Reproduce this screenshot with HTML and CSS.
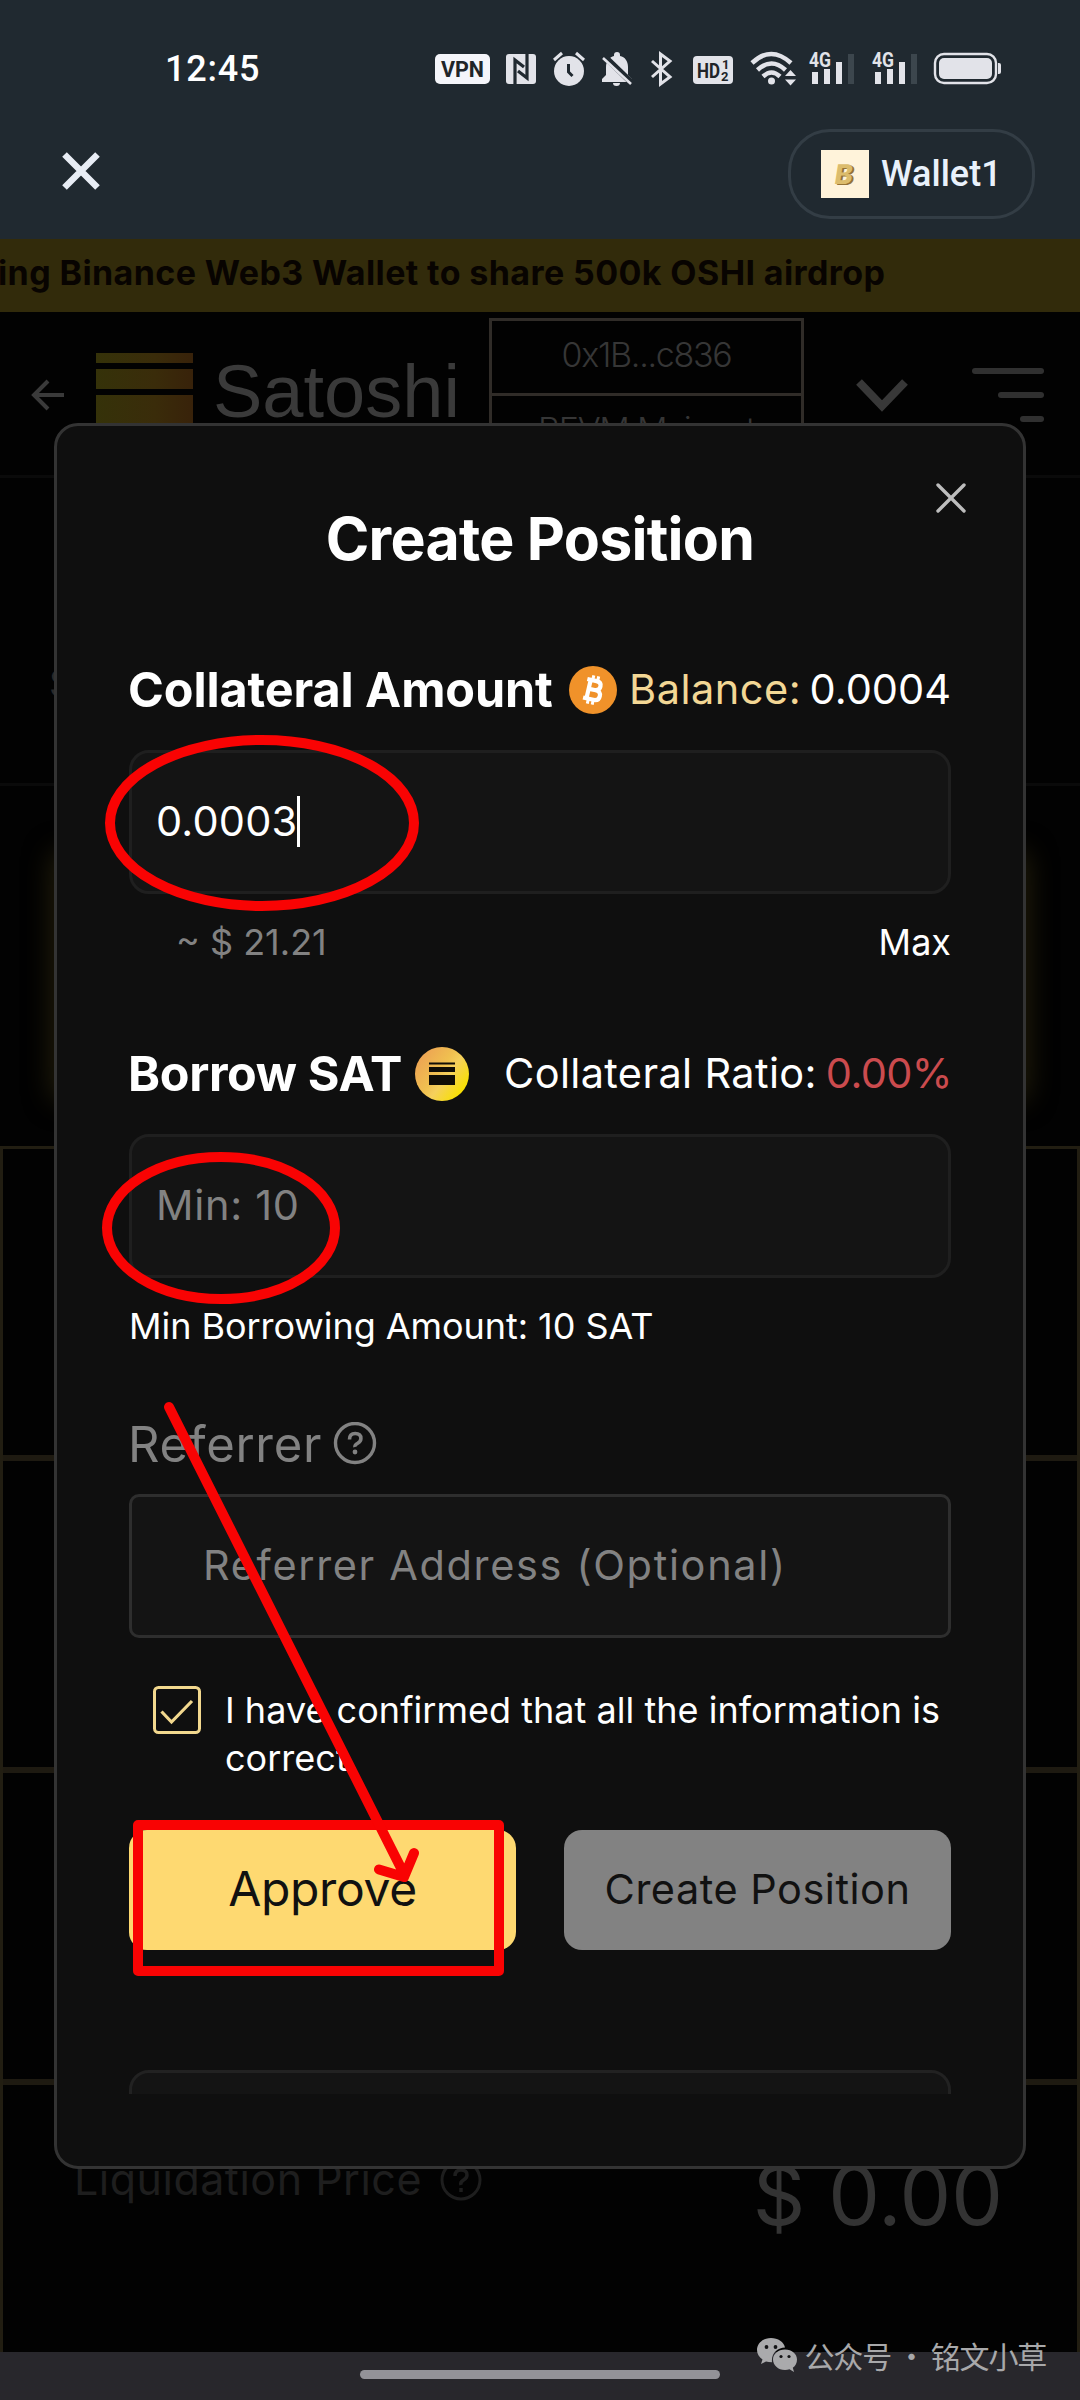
FILE: index.html
```html
<!DOCTYPE html>
<html lang="en">
<head>
<meta charset="utf-8">
<title>Create Position</title>
<link rel="stylesheet" href="styles.css">
</head>
<body>
<div class="screen">
  <header class="statusbar">
    <span class="clock">12:45</span>
    <div class="status-icons">
      <svg width="56" height="36" viewBox="435 51 56 36"><rect x="435" y="54" width="55" height="30" rx="5" fill="#f4f5fa"/><text class="t-vpn" x="441" y="77" textLength="43" lengthAdjust="spacingAndGlyphs">VPN</text></svg>
      <svg width="31" height="36" viewBox="506 51 31 36"><rect x="506" y="54" width="30" height="30" rx="3" fill="#e2e3e9"/><path d="M515 84V60L524 67M527 54V78L518 71" fill="none" stroke="#202930" stroke-width="3.2"/></svg>
      <svg width="33" height="36" viewBox="552 51 33 36"><circle cx="569" cy="71" r="15" fill="#e2e3e9"/><path d="M554 60l8-7M584 60l-8-7" stroke="#e2e3e9" stroke-width="3"/><path d="M568.500 64v8l4 4" fill="none" stroke="#202930" stroke-width="3"/></svg>
      <svg width="36" height="36" viewBox="600 51 36 36"><path d="M602 82v-3l4-4V67c0-6 4-10 8-11v-1q0-3 3-3t3 3v1c5 1 8 5 8 11v8l4 4v3zM613 83h7q0 3-3.500 3t-3.500-3z" fill="#e2e3e9"/><path d="M604 56l29 28" stroke="#202930" stroke-width="6"/><path d="M603 58l28 26" stroke="#e2e3e9" stroke-width="2.600"/></svg>
      <svg width="27" height="36" viewBox="651 51 27 36"><path d="M652 61l18 16-9.500 7V54l9.500 7-18 16" fill="none" stroke="#e2e3e9" stroke-width="3"/></svg>
      <svg width="42" height="36" viewBox="693 51 42 36"><rect x="693" y="56" width="40" height="28" rx="4" fill="#e2e3e9"/><text class="t-hd" x="697" y="78" textLength="23" lengthAdjust="spacingAndGlyphs">HD</text><text class="t-sub" x="722" y="69">1</text><text class="t-sub" x="721" y="81">2</text></svg>
      <svg width="43" height="36" viewBox="750 51 43 36"><g fill="none" stroke="#e2e3e9" stroke-width="4.500"><path d="M752 63q19-18 39 0"/><path d="M757.500 70q14-13 28 0"/><path d="M763 76.500q8.500-8 17 0"/></g><circle cx="771.500" cy="81" r="3.500" fill="#e2e3e9"/><path d="M785 76l5.500-6 5.500 6zM785 79.500l5.500 6 5.500-6z" fill="#e2e3e9"/></svg>
      <svg width="48" height="36" viewBox="808 51 48 36"><text class="t-4g" x="809" y="67" textLength="22" lengthAdjust="spacingAndGlyphs">4G</text><path d="M812 72h6v12h-6zM824 69h6v15h-6zM836 62h6v22h-6z" fill="#e2e3e9"/><path d="M848 54h6v30h-6z" fill="#3c464d"/></svg>
      <svg width="48" height="36" viewBox="808 51 48 36"><text class="t-4g" x="809" y="67" textLength="22" lengthAdjust="spacingAndGlyphs">4G</text><path d="M812 72h6v12h-6zM824 69h6v15h-6zM836 62h6v22h-6z" fill="#e2e3e9"/><path d="M848 54h6v30h-6z" fill="#3c464d"/></svg>
      <svg width="68" height="36" viewBox="934 51 68 36"><rect x="935" y="54" width="61" height="29" rx="9" fill="none" stroke="#e2e3e9" stroke-width="2.400"/><rect x="939" y="58" width="53" height="21" rx="5" fill="#e2e3e9"/><path d="M998 63h1q2 0 2 2v7q0 2-2 2h-1z" fill="#e2e3e9"/></svg>
    </div>
  </header>

  <div class="appbar">
    <svg class="appbar-close" width="38" height="38" viewBox="0 0 38 38"><path d="M2.500 2.500l33 33M35.500 2.500l-33 33" stroke="#e8edf5" stroke-width="6.500"/></svg>
    <div class="wallet">
      <svg width="48" height="48" viewBox="0 0 48 48"><rect width="48" height="48" fill="#fff3da"/><g transform="skewX(-9)"><text class="t-b t-b-back" x="20" y="35">B</text><text class="t-b" x="18" y="34">B</text></g></svg>
      <span>Wallet1</span>
    </div>
  </div>

  <div class="banner"><span>ing Binance Web3 Wallet to share 500k OSHI airdrop</span></div>

  <nav class="nav">
    <svg class="nav-back" width="34" height="32" viewBox="0 0 34 32"><path d="M33 16H3M17 2L3 16l14 14" fill="none" stroke="#3a3a3a" stroke-width="4"/></svg>
    <div class="logo"><i></i><i></i><i></i></div>
    <span class="brand">Satoshi</span>
    <div class="account"><span>0x1B...c836</span><span>BEVM Mainnet</span></div>
    <svg class="nav-chevron" width="52" height="34" viewBox="0 0 52 34"><path d="M3 4l23 24L49 4" fill="none" stroke="#383838" stroke-width="8"/></svg>
    <div class="burger"><i></i><i></i><i></i></div>
  </nav>

  <div class="price"><span>$</span></div>
  <div class="glow-wrap"><div class="glow"></div></div>

  <div class="stats">
    <div class="stat"></div>
    <div class="stat"></div>
    <div class="stat"></div>
    <div class="stat stat-liq">
      <span class="liq-label">Liquidation Price</span>
      <svg class="liq-help" width="42" height="42" viewBox="0 0 42 42"><circle cx="21" cy="21" r="19" fill="none" stroke="#1e1e1e" stroke-width="3"/><path d="M15 17q0-6 6-6t6 5q0 3-3.500 5T21 26M21 29v4" fill="none" stroke="#1e1e1e" stroke-width="3.500"/></svg>
      <span class="liq-value">$ 0.00</span>
    </div>
  </div>

  <footer class="homebar"><i></i></footer>

  <section class="modal">
    <svg class="modal-close" width="30" height="30" viewBox="0 0 30 30"><path d="M2 2l26 26M28 2L2 28" stroke="#bdbdbd" stroke-width="3.400" stroke-linecap="round"/></svg>
    <h1 class="title">Create Position</h1>

    <div class="row row-collateral">
      <h2>Collateral Amount</h2>
      <svg width="48" height="48" viewBox="0 0 48 48"><circle cx="24" cy="24" r="24" fill="#f0922a"/><g transform="rotate(13 24 24)" fill="none" stroke="#fff" stroke-width="4.200"><path d="M16 14.500h9.500q5 0 5 4.500t-5 4.700h-6.500M19.500 14.500v19M16 33.500h10.500q5.500 0 5.500-5t-5.500-4.800"/><path d="M21.500 9.500v5M26.500 9.500v5M21.500 33.500v5M26.500 33.500v5" stroke-width="3"/></g></svg>
      <span class="balance-label">Balance:</span>
      <span class="balance-value">0.0004</span>
    </div>
    <div class="field"><span class="field-value">0.0003</span><i class="caret"></i></div>
    <div class="hint"><span class="usd">~ $ 21.21</span><span class="max">Max</span></div>

    <div class="row row-borrow">
      <h2>Borrow SAT</h2>
      <svg width="54" height="54" viewBox="0 0 54 54"><defs><linearGradient id="sat" x1="0.100" y1="0.200" x2="0.900" y2="0.800"><stop offset="0" stop-color="#eda553"/><stop offset=".42" stop-color="#f0c050"/><stop offset=".6" stop-color="#f5d05c"/><stop offset="1" stop-color="#f8e000"/></linearGradient></defs><circle cx="27" cy="27" r="27" fill="url(#sat)"/><path d="M14 15.500h26v2H14zM14 20h26v5H14zM14 28h26v10H14z" fill="#100d06"/></svg>
      <span class="ratio-label">Collateral Ratio:</span>
      <span class="ratio-value">0.00%</span>
    </div>
    <div class="field"><span class="field-hint">Min: 10</span></div>
    <div class="hint"><span class="min">Min Borrowing Amount: 10 SAT</span></div>

    <div class="referrer">
      <span>Referrer</span>
      <svg width="44" height="44" viewBox="0 0 44 44"><circle cx="22" cy="21" r="19.500" fill="none" stroke="#828282" stroke-width="3.400"/><path d="M16.500 17.500q0-6 5.700-6t5.700 5q0 3-3.200 4.800T22 25" fill="none" stroke="#828282" stroke-width="3.600"/><circle cx="22" cy="30" r="2.400" fill="#828282"/></svg>
    </div>
    <div class="field field-ref"><span>Referrer Address (Optional)</span></div>

    <div class="confirm">
      <svg width="48" height="48" viewBox="0 0 48 48"><rect x="1.500" y="1.500" width="45" height="45" rx="4" fill="none" stroke="#f2d88e" stroke-width="3"/><path d="M8.500 25.500L18.500 36 39 15" fill="none" stroke="#f2d88e" stroke-width="3.200"/></svg>
      <p>I have confirmed that all the information is correct.</p>
    </div>

    <div class="actions">
      <button class="approve">Approve</button>
      <button class="create">Create Position</button>
    </div>
    <div class="peek"><div class="peek-box"></div></div>
  </section>

  <svg class="marks" width="1080" height="2400" viewBox="0 0 1080 2400" fill="none" stroke="#f90303" stroke-width="10">
    <ellipse cx="262" cy="823" rx="152" ry="83"/>
    <ellipse cx="221" cy="1228" rx="114" ry="71"/>
    <rect x="138" y="1825" width="361" height="146" stroke-linejoin="round"/>
    <path d="M169 1407L404 1874M379 1869.500L404 1877L414 1853" stroke-linecap="round" stroke-linejoin="round"/>
  </svg>

  <div class="watermark">
    <svg width="42" height="36" viewBox="0 0 42 36"><path d="M15 1C7 1 1 6.500 1 13c0 4 2 7 5.500 9.500L5 27l5-2.500q2.500.8 6 .8C15 16 22 10.500 29 10.500 28 5 22 1 15 1z" fill="#aaaaac"/><path d="M29 12.500c-7 0-12 4.500-12 10s5 10.500 12 10.500q2.500 0 4.500-.7L38 35l-1.200-4.200C39.500 29 41 26 41 22.500c0-5.500-5-10-12-10z" fill="#aaaaac"/><g fill="#141416"><circle cx="10.500" cy="10" r="1.900"/><circle cx="19.500" cy="10" r="1.900"/><circle cx="25" cy="19.500" r="1.600"/><circle cx="33" cy="19.500" r="1.600"/></g></svg>
    <span>公众号 · 铭文小草</span>
  </div>
</div>
</body>
</html>
```
FILE: styles.css
```css
* { box-sizing: border-box; margin: 0; padding: 0; }
body { background: #020202; font-family: Inter, "Liberation Sans", sans-serif; }
svg, i { display: block; flex: none; }
span { white-space: nowrap; }

.screen { position: relative; width: 1080px; height: 2400px; overflow: hidden; background: #020202; display: flex; flex-direction: column; }
.screen > * { flex: none; }

/* system bar */
.statusbar { height: 138px; background: #202930; display: flex; align-items: center; padding: 0 78px 0 165px; justify-content: space-between; }
.clock { font: 500 36px/44px Roboto, sans-serif; letter-spacing: .8px; color: #fff; }
.status-icons { display: flex; gap: 15px; }
.status-icons svg { overflow: visible; }
.t-vpn { font: 700 22px Roboto, sans-serif; fill: #202428; }
.t-hd { font: 700 21px Roboto, sans-serif; fill: #202428; }
.t-sub { font: 700 13px Roboto, sans-serif; fill: #202428; }
.t-4g { font: 700 20px Roboto, sans-serif; fill: #e2e3e9; }

.appbar { height: 101px; background: #202930; display: flex; justify-content: space-between; align-items: flex-start; padding: 0 45px 0 62px; }
.appbar-close { margin-top: 14px; }
.wallet { margin-top: -9px; width: 247px; height: 90px; border: 3px solid #333d45; border-radius: 42px; display: flex; align-items: center; gap: 12px; padding-left: 30px; font: 500 36px/44px Roboto, sans-serif; color: #e9f1fb; }
.t-b { font: 800 27px Inter, sans-serif; fill: #dcbc6c; }
.t-b-back { fill: #957336; }

.banner { height: 73px; background: #322b0b; color: #080401; font-size: 34px; line-height: 68px; font-weight: 650; letter-spacing: .4px; }
.banner span { margin-left: -2px; }

/* site navigation */
.nav { height: 166px; border-bottom: 3px solid #0a0a0a; padding: 6px 36px 4px 31px; display: flex; align-items: center; }
.logo { margin-left: 31px; width: 97px; display: flex; flex-direction: column; gap: 6px; }
.logo i { background: linear-gradient(90deg, #353209, #3a2c0a 60%, #38220a); }
.logo i:nth-child(1) { height: 10px; }
.logo i:nth-child(2) { height: 20px; }
.logo i:nth-child(3) { height: 42px; }
.brand { width: 296px; padding-left: 20px; margin-top: -5px; font: 400 74px/80px "Liberation Sans", sans-serif; letter-spacing: 0; color: #3a3a3a; }
.account { align-self: flex-start; width: 315px; height: 150px; border: 3px solid #302c28; display: flex; flex-direction: column; color: #363636; font-size: 34px; font-weight: 300; letter-spacing: -1.3px; text-align: center; }
.account span { flex: none; height: 72px; line-height: 68px; }
.account span + span { border-top: 3px solid #302c28; line-height: 67px; }
.nav-chevron { margin-left: 52px; }
.burger { margin-left: auto; display: flex; flex-direction: column; gap: 18px; align-items: flex-end; }
.burger i { height: 6px; border-radius: 3px; background: #303030; width: 72px; }
.burger i:nth-child(2) { width: 46px; }
.burger i:nth-child(3) { width: 24px; }

.price { height: 308px; border-bottom: 3px solid #0a0a0a; padding: 178px 0 0 49px; font-size: 38px; line-height: 54px; color: #2a2a2a; }
.glow-wrap { height: 360px; padding: 70px 57px 50px; }
.glow { height: 240px; border-radius: 6px; background: #29260f; box-shadow: 0 0 28px 5px #231e0a; }

.stats { height: 1206px; border: solid #221e12; border-width: 3px 3px 0; }
.stat { height: 312px; border-bottom: 6px solid #1e1a11; }
.stat-liq { height: 267px; border: 0; display: flex; padding: 64px 76px 0 71px; }
.liq-label { width: 366px; font-size: 43px; line-height: 60px; letter-spacing: .5px; color: #1e1e1e; }
.liq-help { margin-top: 10px; }
.liq-value { margin: 2px 0 0 auto; font-size: 82px; line-height: 90px; margin-right: -2px; color: #333; }

.homebar { height: 48px; background: #28272c; padding-top: 18px; }
.homebar i { width: 360px; height: 9px; border-radius: 5px; background: #939298; margin: 0 auto; }

/* dialog */
.modal { position: absolute; left: 54px; top: 423px; width: 972px; height: 1746px; border: 3px solid #333; border-radius: 24px; background: #0f0f0f; padding: 84px 72px 0; color: #fff; }
.modal-close { position: absolute; right: 57px; top: 57px; }
.title { font-size: 59px; line-height: 58px; margin-bottom: 98px; font-weight: 700; letter-spacing: -.75px; text-align: center; }
.row { display: flex; align-items: center; font-size: 41.500px; line-height: 46px; }
.row span { margin-top: -2px; }
.row h2 { font-size: 48.500px; line-height: 48px; font-weight: 700; white-space: nowrap; margin-left: -1px; }
.row-collateral { height: 48px; margin: 0 0 36px; }
.row-collateral h2 { width: 441px; letter-spacing: -.1px; }
.row .balance-label { margin-left: 12px; color: #f3d795; letter-spacing: .5px; }
.row .balance-value { margin-left: auto; }
.row-borrow { height: 54px; margin: 83px 0 33px; }
.row-borrow h2 { width: 287px; letter-spacing: -.350px; }
.row .ratio-label { margin-left: 35px; letter-spacing: .350px; }
.row .ratio-value { margin-left: auto; color: #cb4b4e; letter-spacing: -.6px; margin-right: -1px; }

.field { height: 144px; border: 3px solid #1f1f1f; border-radius: 20px; background: #141414; display: flex; align-items: center; padding: 0 0 2px 24px; font-size: 41.500px; }
.field-value { letter-spacing: .2px; }
.caret { width: 3px; height: 51px; background: #fff; }
.field-hint { color: #828282; letter-spacing: .7px; }
.hint { height: 44px; margin-top: 26px; display: flex; justify-content: space-between; font-size: 36px; line-height: 44px; }
.usd { margin-left: 47px; color: #828282; }
.min { letter-spacing: -.05px; }

.referrer { height: 48px; margin: 72px 0 26px; display: flex; align-items: center; font-size: 49px; color: #828282; }
.referrer span { width: 205px; margin-left: -1px; letter-spacing: .7px; }
.field-ref { border-color: #2e2e2e; border-radius: 10px; padding-left: 71px; color: #828282; letter-spacing: 1.650px; }
.confirm { margin: 48px 0; padding-left: 24px; height: 96px; display: flex; gap: 24px; }
.confirm p { width: 725px; font-size: 36px; line-height: 48px; letter-spacing: .03px; }

.actions { display: grid; grid-template-columns: 1fr 1fr; gap: 48px; height: 120px; }
.actions button { border: 0; border-radius: 18px; font-family: inherit; color: #111; padding: 0 0 3px; }
.approve { background: #fed971; font-size: 48px; letter-spacing: -.34px; }
.actions .create { background: #828282; font-size: 41.500px; letter-spacing: .5px; }
.peek { margin-top: 120px; height: 24px; overflow: hidden; }
.peek-box { height: 144px; border: 3px solid #222; border-radius: 20px; background: #141414; }

/* hand-drawn marks */
.marks { position: absolute; left: 0; top: 0; }

.watermark { position: absolute; right: 34px; top: 2333px; display: flex; align-items: center; gap: 7px; color: #a8a8aa; font: 400 30px/44px "Noto Sans CJK SC", sans-serif; letter-spacing: -1.200px; }
```
